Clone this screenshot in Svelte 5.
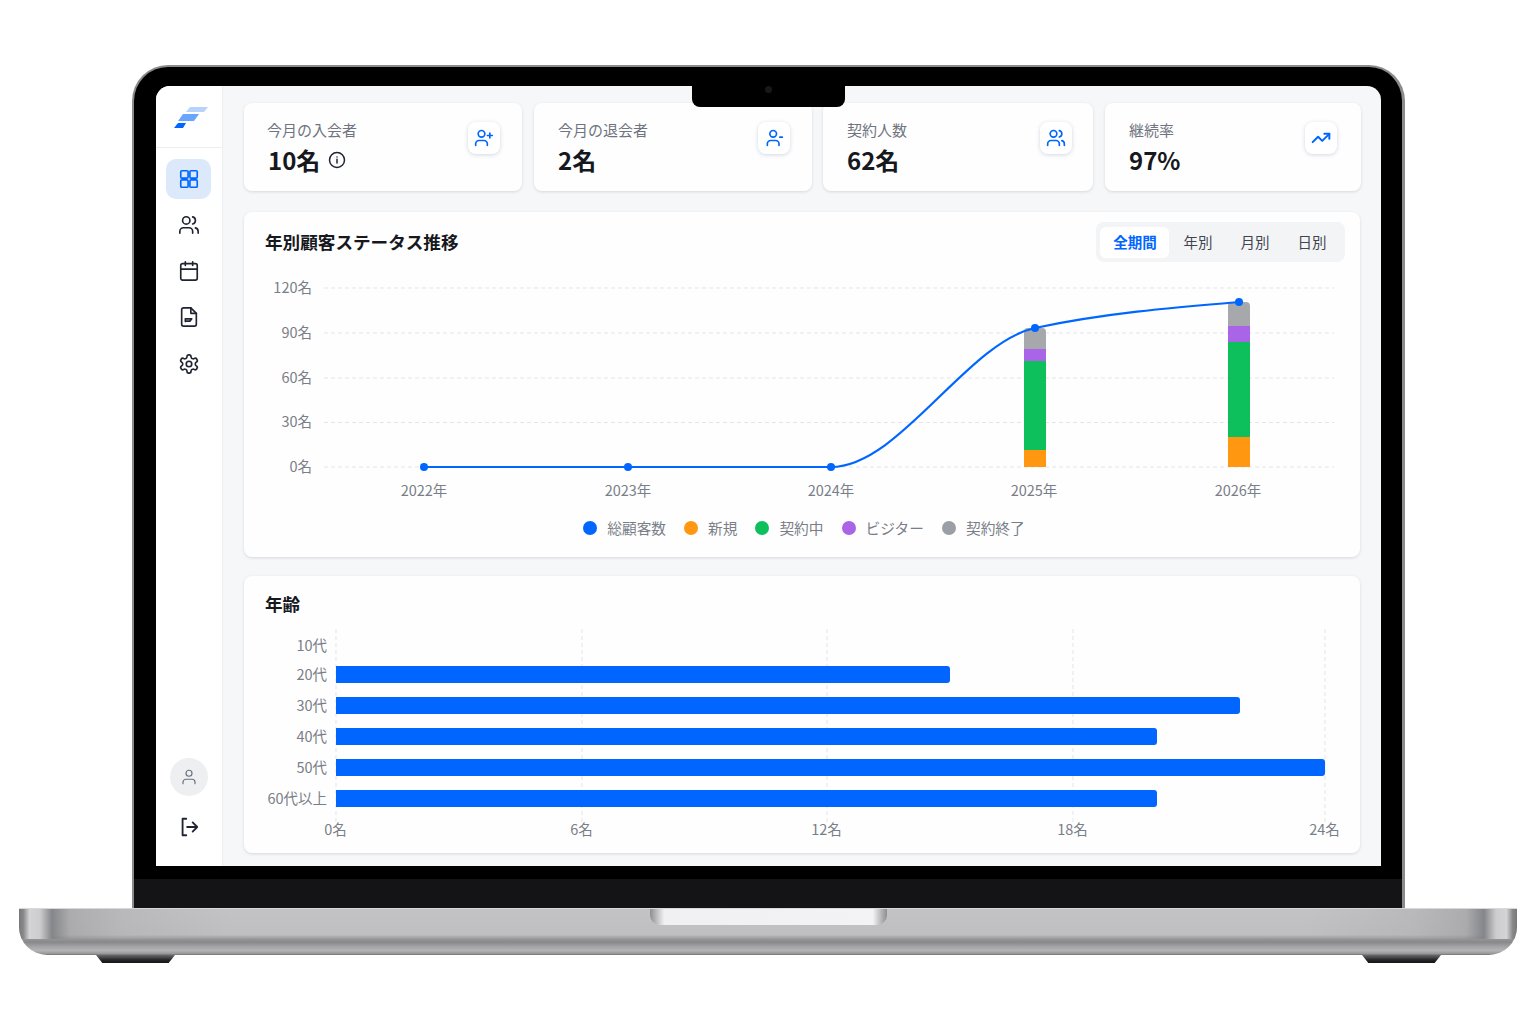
<script>
  const cards = [
    { label: '今月の入会者', value: '10名', info: true, w: 278, icon: 'userPlus' },
    { label: '今月の退会者', value: '2名', w: 278, icon: 'userMinus' },
    { label: '契約人数', value: '62名', w: 270, icon: 'users' },
    { label: '継続率', value: '97%', w: 256, icon: 'trend' }
  ];
  const tabs = ['全期間', '年別', '月別', '日別'];
  const legend = [
    { t: '総顧客数', c: '#0066ff' },
    { t: '新規', c: '#ff9810' },
    { t: '契約中', c: '#0dc05c' },
    { t: 'ビジター', c: '#aa64e8' },
    { t: '契約終了', c: '#9a9ea6' }
  ];
  const T = 271;
  const OX = 265;
  const yTicks = [
    { t: '120名', y: 288 - T }, { t: '90名', y: 333 - T }, { t: '60名', y: 378 - T },
    { t: '30名', y: 422.5 - T }, { t: '0名', y: 467 - T }
  ];
  const years = [
    { t: '2022年', x: 424 }, { t: '2023年', x: 628 }, { t: '2024年', x: 831 },
    { t: '2025年', x: 1034 }, { t: '2026年', x: 1238 }
  ];
  const stacks = [
    { x: 1024, seg: [[450, 467, '#ff9810'], [361, 450, '#0dc05c'], [349, 361, '#aa64e8'], [328, 349, '#a6a8ac']] },
    { x: 1228, seg: [[437, 467, '#ff9810'], [342, 437, '#0dc05c'], [326, 342, '#aa64e8'], [302, 326, '#a6a8ac']] }
  ];
  const ages = [
    { t: '10代', y: 645, bar: 0, end: 0 }, { t: '20代', y: 674.5, bar: 666, end: 950 }, { t: '30代', y: 705.5, bar: 697, end: 1240 },
    { t: '40代', y: 736.5, bar: 728, end: 1157 }, { t: '50代', y: 767.5, bar: 759, end: 1325 }, { t: '60代以上', y: 798.5, bar: 790, end: 1157 }
  ];
  const AT = 624;
  const vTicks = [{ t: '0名', x: 336 }, { t: '6名', x: 582 }, { t: '12名', x: 827 }, { t: '18名', x: 1073 }, { t: '24名', x: 1325 }];
</script>

{#snippet icon(name)}
  <svg class="ic" viewBox="0 0 24 24" fill="none" stroke="currentColor" stroke-width="2" stroke-linecap="round" stroke-linejoin="round">
    {#if name === 'userPlus'}
      <path d="M16 21v-2a4 4 0 0 0-4-4H6a4 4 0 0 0-4 4v2" /><circle cx="9" cy="7" r="4" /><path d="M19 6v6M22 9h-6" />
    {:else if name === 'userMinus'}
      <path d="M18 21v-2a4 4 0 0 0-4-4H8a4 4 0 0 0-4 4v2" /><circle cx="11" cy="7" r="4" /><path d="M19 11h3" />
    {:else if name === 'users'}
      <path d="M16 21v-2a4 4 0 0 0-4-4H6a4 4 0 0 0-4 4v2" /><circle cx="9" cy="7" r="4" /><path d="M22 21v-2a4 4 0 0 0-3-3.87M16 3.13a4 4 0 0 1 0 7.75" />
    {:else if name === 'trend'}
      <path d="M22 7l-8.5 8.5-5-5L2 17" stroke-width="2.4" /><path d="M16 7h6v6" stroke-width="2.4" />
    {:else if name === 'grid'}
      <rect x="3" y="3" width="8" height="8" rx="1.2" /><rect x="13" y="3" width="8" height="8" rx="1.2" /><rect x="3" y="13" width="8" height="8" rx="1.2" /><rect x="13" y="13" width="8" height="8" rx="1.2" />
    {:else if name === 'calendar'}
      <path d="M8 2v4M16 2v4" /><rect x="3" y="4" width="18" height="18" rx="2" /><path d="M3 10h18" />
    {:else if name === 'file'}
      <path d="M14 2H6a2 2 0 0 0-2 2v16a2 2 0 0 0 2 2h12a2 2 0 0 0 2-2V8z" /><path d="M14 2v6h6" /><path d="M8 17v-3h7l-2 2.5H8" />
    {:else if name === 'gear'}
      <path d="M12.22 2h-.44a2 2 0 0 0-2 2v.18a2 2 0 0 1-1 1.73l-.43.25a2 2 0 0 1-2 0l-.15-.08a2 2 0 0 0-2.73.73l-.22.38a2 2 0 0 0 .73 2.73l.15.1a2 2 0 0 1 1 1.72v.51a2 2 0 0 1-1 1.74l-.15.09a2 2 0 0 0-.73 2.73l.22.38a2 2 0 0 0 2.73.73l.15-.08a2 2 0 0 1 2 0l.43.25a2 2 0 0 1 1 1.73V20a2 2 0 0 0 2 2h.44a2 2 0 0 0 2-2v-.18a2 2 0 0 1 1-1.73l.43-.25a2 2 0 0 1 2 0l.15.08a2 2 0 0 0 2.73-.73l.22-.39a2 2 0 0 0-.73-2.73l-.15-.08a2 2 0 0 1-1-1.74v-.5a2 2 0 0 1 1-1.74l.15-.09a2 2 0 0 0 .73-2.73l-.22-.38a2 2 0 0 0-2.73-.73l-.15.08a2 2 0 0 1-2 0l-.43-.25a2 2 0 0 1-1-1.73V4a2 2 0 0 0-2-2z" /><circle cx="12" cy="12" r="3" />
    {:else if name === 'user'}
      <path d="M20 21v-2a4 4 0 0 0-4-4H8a4 4 0 0 0-4 4v2" /><circle cx="12" cy="7" r="4" />
    {:else if name === 'logout'}
      <path d="M9 3H5v18h4" /><path d="M10 12h11M16 7l5 5-5 5" />
    {:else if name === 'info'}
      <circle cx="12" cy="12" r="10" /><path d="M12 16v-5M12 8h.01" />
    {/if}
  </svg>
{/snippet}

<div class="page">
  <div class="lid">
    <div class="screen">
      <div class="notch"><span class="cam"></span></div>
      <aside class="side">
        <div class="logo">
          <svg width="34" height="21" viewBox="0 0 34 21">
            <path d="M16 0h18l-4 5H12z" fill="#b7d2fc" />
            <path d="M9 7h16l-5 7H4z" fill="#6aa5fd" />
            <path d="M4 16h8l-3 5H0z" fill="#0066ff" />
          </svg>
        </div>
        <nav class="nav">
          <div class="nav-item active">{@render icon('grid')}</div>
          <div class="nav-item">{@render icon('users')}</div>
          <div class="nav-item">{@render icon('calendar')}</div>
          <div class="nav-item">{@render icon('file')}</div>
          <div class="nav-item gear">{@render icon('gear')}</div>
        </nav>
        <div class="side-foot">
          <div class="avatar">{@render icon('user')}</div>
          <div class="logout">{@render icon('logout')}</div>
        </div>
      </aside>
      <main class="main">
        <div class="stats">
          {#each cards as c}
            <section class="card stat" style="width:{c.w}px">
              <div>
                <div class="stat-label">{c.label}</div>
                <div class="stat-value">{c.value}{#if c.info}<span class="info">{@render icon('info')}</span>{/if}</div>
              </div>
              <div class="tile">{@render icon(c.icon)}</div>
            </section>
          {/each}
        </div>

        <section class="card trend">
          <header class="head">
            <h2>年別顧客ステータス推移</h2>
            <div class="tabs">
              {#each tabs as t, i}<button class="tab" class:on={i === 0}>{t}</button>{/each}
            </div>
          </header>
          <svg class="chart" width="1095" height="246" viewBox="0 0 1095 246">
            {#each yTicks as t}
              <line x1="59" x2="1069" y1={t.y} y2={t.y} class="grid" />
              <text x="47" y={t.y + 4.5} text-anchor="end" class="ax">{t.t}</text>
            {/each}
            {#each years as y}
              <text x={y.x - OX} y={491 - T + 5} text-anchor="middle" class="ax">{y.t}</text>
            {/each}
            {#each stacks as s}
              {#each s.seg as g, i}
                {#if i === 3}
                  <path d="M{s.x - OX} {g[1] - T}V{g[0] - T + 4}a4 4 0 0 1 4-4h14a4 4 0 0 1 4 4V{g[1] - T}z" fill={g[2]} />
                {:else}
                  <rect x={s.x - OX} y={g[0] - T} width="22" height={g[1] - g[0]} fill={g[2]} />
                {/if}
              {/each}
            {/each}
            <path d="M159 196H566C634 196 702 71.6 770 57C838 42.4 906 36.7 974 31" fill="none" stroke="#0066ff" stroke-width="2.2" />
            {#each [[424, 467], [628, 467], [831, 467], [1035, 328], [1239, 302]] as p}
              <circle cx={p[0] - OX} cy={p[1] - T} r="4" fill="#0066ff" />
            {/each}
          </svg>
          <div class="legend">
            {#each legend as l}
              <span class="leg"><i style="background:{l.c}"></i>{l.t}</span>
            {/each}
          </div>
        </section>

        <section class="card ages">
          <h2>年齢</h2>
          <svg class="chart" width="1095" height="220" viewBox="0 0 1095 220">
            {#each vTicks as v}
              <line x1={v.x - OX} x2={v.x - OX} y1={629 - AT} y2={822 - AT} class="grid v" />
              <text x={v.x - OX - 0.5} y={830 - AT + 5} text-anchor="middle" class="ax">{v.t}</text>
            {/each}
            {#each ages as a}
              <text x="62" y={a.y - AT + 5.5} text-anchor="end" class="ax">{a.t}</text>
              {#if a.end}
                <path d="M71 {a.bar - AT}H{a.end - OX - 3}a3 3 0 0 1 3 3v11a3 3 0 0 1-3 3H71z" fill="#0066ff" />
              {/if}
            {/each}
          </svg>
        </section>
      </main>
    </div>
    <div class="chin"></div>
  </div>
  <div class="base">
    <div class="thumb"></div>
  </div>
  <div class="feet"><span class="foot"></span><span class="foot"></span></div>
</div>

<style>
  :global(body) { margin: 0; background: #fff; }
  .page {
    width: 1536px;
    height: 1024px;
    padding-top: 65px;
    box-sizing: border-box;
    font-family: "Noto Sans CJK JP", "Noto Sans", sans-serif;
    overflow: hidden;
  }
  .lid {
    box-sizing: border-box;
    width: 1273px;
    height: 843px;
    margin-left: 132px;
    background: #000;
    border: 2px solid #8b8b8e;
    border-right-width: 3px;
    border-bottom: 0;
    border-radius: 36px 36px 0 0;
    padding: 19px 21px 0 22px;
    display: flex;
    flex-direction: column;
  }
  .screen {
    position: relative;
    height: 780px;
    flex: none;
    display: flex;
    background: #f6f7f8;
    border-radius: 14px 14px 0 0;
    overflow: hidden;
  }
  .chin { margin: 13px -21px 0 -22px; flex: 1; background: #141416; }
  .notch {
    position: absolute;
    left: 536px;
    top: 0;
    width: 153px;
    height: 21px;
    background: #000;
    border-radius: 0 0 8px 8px;
    display: flex;
    justify-content: center;
  }
  .cam { width: 7px; height: 7px; border-radius: 50%; background: #17181c; }
  .side {
    width: 67px;
    flex: none;
    box-sizing: border-box;
    background: #fff;
    border-right: 1px solid #eceef0;
    display: flex;
    flex-direction: column;
    color: #1f2430;
  }
  .logo {
    height: 62px;
    flex: none;
    border-bottom: 1px solid #eceef0;
    display: flex;
    align-items: center;
    justify-content: center;
    box-sizing: border-box;
    padding: 2px 0 0 3px;
  }
  .nav { display: flex; flex-direction: column; align-items: center; gap: 6px; margin-top: 11px; padding-right: 1px; }
  .nav-item {
    width: 45px;
    height: 40px;
    border-radius: 10px;
    display: flex;
    align-items: center;
    justify-content: center;
  }
  .nav-item .ic { width: 22px; height: 22px; stroke-width: 1.8; }
  .nav-item.active { background: #dce9fb; color: #0066ff; }
  .nav-item.gear { margin-top: 1px; }
  .side-foot { margin-top: auto; display: flex; flex-direction: column; align-items: center; gap: 20px; padding: 0 1px 28px 0; }
  .avatar {
    width: 38px;
    height: 38px;
    border-radius: 50%;
    background: #eeeff1;
    color: #6b7280;
    display: flex;
    align-items: center;
    justify-content: center;
  }
  .avatar .ic { width: 18px; height: 18px; stroke-width: 1.6; }
  .logout { height: 22px; color: #1f2430; }
  .logout .ic { width: 22px; height: 22px; }
  .main {
    flex: 1;
    min-width: 0;
    box-sizing: border-box;
    padding: 17px 21px 0 21px;
    display: flex;
    flex-direction: column;
    gap: 20px;
  }
  .stats { display: flex; gap: 12px; }
  .card {
    background: #fefefe;
    border-radius: 8px;
    box-shadow: 0 1px 3px rgba(40, 50, 80, 0.15);
    box-sizing: border-box;
  }
  .stat {
    height: 88px;
    flex: none;
    padding: 17px 22px 0 24px;
    display: flex;
    justify-content: space-between;
    align-items: flex-start;
  }
  .stats .stat:nth-child(1) .stat-label { margin-left: -1px; }
  .stats .stat:nth-child(3) { margin-left: -1px; padding-right: 21px; }
  .stats .stat:nth-child(4) { padding-right: 24px; }
  .stat-label { font-size: 15px; line-height: 20px; color: #6f7480; }
  .stat-value {
    font-size: 24px;
    font-weight: 700;
    line-height: 30px;
    margin-top: 5px;
    color: #16181d;
    display: flex;
    align-items: center;
  }
  .info { margin-left: 8px; display: flex; color: #1f2430; }
  .info .ic { width: 18px; height: 18px; }
  .tile {
    width: 32px;
    height: 32px;
    margin-top: 2px;
    border-radius: 8px;
    background: #fff;
    box-shadow: 0 1px 4px rgba(40, 60, 110, 0.2);
    color: #0066ff;
    display: flex;
    align-items: center;
    justify-content: center;
  }
  .tile .ic { width: 20px; height: 20px; }
  h2 {
    margin: 0;
    font-size: 17.6px;
    font-weight: 700;
    line-height: 24px;
    color: #16181d;
  }
  .trend { height: 345px; margin-top: 1px; padding: 0 15px 0 21px; }
  .head { height: 59px; display: flex; align-items: center; justify-content: space-between; padding-top: 1px; box-sizing: border-box; }
  .tabs {
    width: 249px;
    height: 40px;
    box-sizing: border-box;
    padding: 5px 4px;
    border-radius: 8px;
    background: #f3f4f6;
    display: flex;
    align-items: center;
  }
  .tab {
    border: 0;
    background: none;
    padding: 0 0 2px 1px;
    height: 31px;
    font: inherit;
    font-size: 14.5px;
    color: #3f4450;
    width: 57px;
  }
  .tab.on {
    width: 69px;
    background: #fff;
    border-radius: 6px;
    color: #0066ff;
    font-weight: 700;
  }
  .chart { display: block; }
  .grid { stroke: #e3e5ea; stroke-dasharray: 4 3; stroke-width: 1; }
  .ax { font-size: 14.5px; fill: #7a7e88; font-family: "Noto Sans CJK JP", "Noto Sans", sans-serif; }
  .legend {
    height: 22px;
    display: flex;
    justify-content: center;
    gap: 18px;
    font-size: 14.7px;
    color: #7a7e88;
    padding-right: 2px;
    align-items: center;
  }
  .leg { display: flex; align-items: center; gap: 10px; line-height: 20px; }
  .leg i { width: 14px; height: 14px; border-radius: 50%; display: block; }
  .ages { flex: none; height: 277px; margin-top: -1px; padding: 16px 0 0 21px; }
  .ages h2 { height: 32px; }
  .base {
    position: relative;
    width: 1498px;
    height: 47px;
    margin-left: 19px;
    border-radius: 0 0 28px 28px;
    border-top: 1px solid #d8d8da;
    box-sizing: border-box;
    background:
      linear-gradient(90deg, #77787a 0, #8a8a8c 0.3%, #d4d4d6 0.7%, #cdcdcf 1.4%, #85868a 2.2%, rgba(150,150,152,0.5) 3.4%, rgba(168,168,170,0.35) 7%, rgba(0,0,0,0) 14%, rgba(0,0,0,0) 86%, rgba(168,168,170,0.35) 93%, rgba(150,150,152,0.5) 96.6%, #85868a 97.8%, #cdcdcf 98.6%, #d4d4d6 99.3%, #8a8a8c 99.7%, #77787a 100%) top / 100% 66% no-repeat,
      linear-gradient(180deg, #c3c3c5 0, #bfbfc1 56%, #949496 66%, #88888a 72%, #a4a4a6 82%, #b4b4b6 90%, #98989a 97%, #6f6f71 100%);
  }
  .thumb {
    position: absolute;
    left: 631px;
    top: 0;
    width: 237px;
    height: 16px;
    border-radius: 0 0 10px 10px;
    background: linear-gradient(90deg, #8e8e90 0, #c0c0c2 3%, #f0f0f2 6%, #f3f3f5 94%, #c0c0c2 97%, #8e8e90 100%);
  }
  .feet { display: flex; justify-content: space-between; width: 1345px; margin-left: 96px; }
  .foot {
    width: 79px;
    height: 8px;
    background: linear-gradient(180deg, #6a6a6c 0, #26272a 60%, #131416 100%);
    clip-path: polygon(0 0, 100% 0, 92% 100%, 8% 100%);
  }
</style>
